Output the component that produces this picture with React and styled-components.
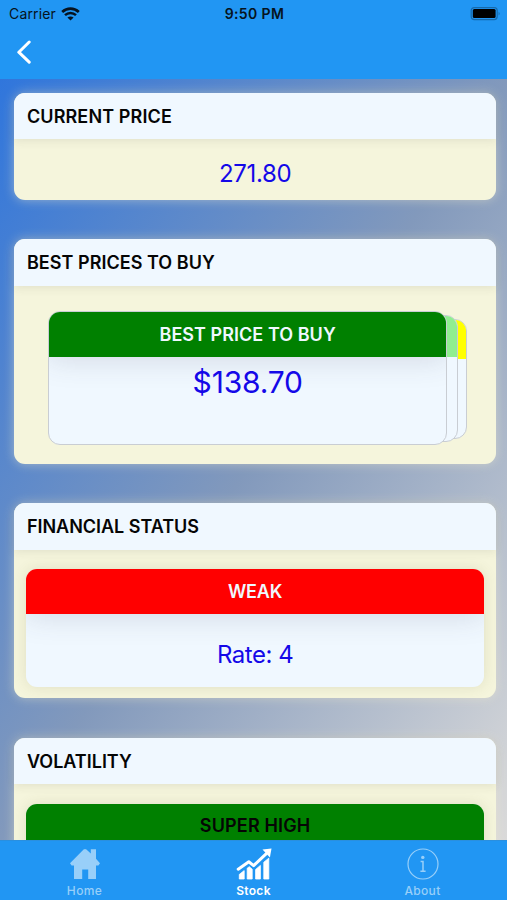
import styled, { createGlobalStyle } from 'styled-components'

const GlobalStyle = createGlobalStyle`
  * {
    box-sizing: border-box;
  }
  body {
    margin: 0;
    overflow: hidden;
    font-family: Inter, "Liberation Sans", sans-serif;
    color: #050505;
  }
`

const Screen = styled.div`
  height: 900px;
  display: flex;
  flex-direction: column;
  background-color: #2196f3;
`

const StatusBar = styled.div`
  height: 27px;
  flex-shrink: 0;
  display: grid;
  grid-template-columns: 1fr auto 1fr;
  align-items: center;
  padding: 0 6px 0 9px;
  font-size: 14px;
  color: #061320;
`

const Carrier = styled.div`
  display: flex;
  align-items: center;
  gap: 5px;
  letter-spacing: 0.15px;
`

const Time = styled.div`
  font-weight: 600;
  letter-spacing: 0.4px;
  margin-right: 1px;
`

const Battery = styled.svg`
  justify-self: end;
`

const NavBar = styled.header`
  height: 52px;
  flex-shrink: 0;
  padding: 13px 0 0 16px;
`

const BackBtn = styled.button`
  display: block;
  padding: 0;
  border: none;
  background: none;
`

const Content = styled.main`
  flex: 1;
  min-height: 0;
  overflow: hidden;
  display: flex;
  flex-direction: column;
  gap: 39.5px;
  padding: 13.5px 11.2px 0 14.4px;
  background: linear-gradient(to bottom right, #3076dc, #8299bc 50%, #dadada);
`

const Card = styled.section`
  height: ${props => props.$height}px;
  flex-shrink: 0;
  display: flex;
  flex-direction: column;
  border-radius: 11px;
  background-color: beige;
  box-shadow: 0 0 11px rgba(245, 238, 205, 0.48);
`

const CardTitle = styled.h2`
  height: 46.5px;
  flex-shrink: 0;
  margin: 0;
  padding: 0 12.5px;
  font-size: 18px;
  line-height: 47px;
  font-weight: 600;
  letter-spacing: ${props => props.$spacing || 0}px;
  border-radius: 11px 11px 0 0;
  background-color: aliceblue;
  box-shadow: 0 2px 10px rgba(60, 60, 60, 0.1);
`

const CardBody = styled.div`
  flex: 1;
  padding: ${props => props.$padding || '0'};
`

const Value = styled.div`
  text-align: center;
  color: #1408e8;
  font-size: ${props => props.$size || 24}px;
  line-height: ${props => props.$line}px;
  letter-spacing: ${props => props.$spacing || 0}px;
`

const Panel = styled.div`
  height: 117.5px;
  border-radius: 11px;
  overflow: hidden;
  background-color: aliceblue;
  box-shadow: 0 0 14px rgba(100, 100, 60, 0.14);
`

const Banner = styled.div`
  height: 45px;
  text-align: center;
  font-size: 18px;
  line-height: ${props => props.$line || 45}px;
  font-weight: 600;
  letter-spacing: ${props => props.$spacing || 0}px;
  color: ${props => props.$text || 'aliceblue'};
  background-color: ${props => props.$color};
  box-shadow: 0 2px 30px rgba(60, 60, 90, 0.17);
`

const Deck = styled.div`
  position: relative;
  height: 134px;
  width: 398px;
`

// cards further back are shorter and stick out to the right
const DeckCard = styled.div`
  position: absolute;
  top: ${props => props.$depth * 3.75}px;
  bottom: ${props => props.$depth * 3.2}px;
  left: ${props => props.$offset || 0}px;
  width: 398.5px;
  z-index: ${props => 3 - props.$depth};
  overflow: hidden;
  border: 1px solid #c9cdd3;
  border-radius: 12px;
  background-color: aliceblue;
`

const DeckBanner = styled(Banner)`
  height: ${props => props.$height}px;
  margin: -1px -1px 0;
  box-shadow: ${props => props.$flat ? 'none' : '0 2px 30px rgba(60, 60, 90, 0.17)'};
`

const TabBar = styled.nav`
  height: 60px;
  flex-shrink: 0;
  display: grid;
  grid-template-columns: repeat(3, 1fr);
  border-top: 1px solid #2a8fdf;
`

const Tab = styled.div`
  display: flex;
  flex-direction: column;
  align-items: center;
  padding-top: 7px;
  gap: 2px;
  font-size: 12px;
  line-height: 18px;
  font-weight: ${props => props.$active ? 600 : 500};
  letter-spacing: ${props => props.$active ? 0.3 : 0.35}px;
  color: ${props => props.$active ? 'white' : '#98cff9'};
`

function WifiIcon(){
  return(
    <svg width="19" height="14" viewBox="0 0 19 14" fill="none" stroke="#061320">
      <path d="M1.2 4.9C6 .4 13 .4 17.8 4.9" strokeWidth="2.7"/>
      <path d="M4 8.2C7.2 5.2 11.8 5.2 15 8.2" strokeWidth="2.5"/>
      <path d="M9.5 13.6 6.4 10.6C8.2 9 10.8 9 12.6 10.6Z" fill="#061320" stroke="none"/>
    </svg>
  )
}

function HomeIcon(){
  return(
    <svg width="32" height="32" viewBox="0 0 32 32" fill="currentColor">
      <path d="M16 1.4Q16.6 .8 17.4 1.4L21.8 5.6V1.2H27V10.8L31 15.2 29.4 17.4H27V31H19.2V21.6H13.2V31H5V17.4H2.6L1 15.2 14.6 1.4Q15.3 .8 16 1.4Z"/>
    </svg>
  )
}

function StockIcon(){
  return(
    <svg width="36" height="32" viewBox="0 0 36 32" fill="currentColor">
      <path d="M2.2 21.2 12.8 13.8 17.6 17.6 30.6 5.4" fill="none" stroke="currentColor" strokeWidth="3" strokeLinecap="round" strokeLinejoin="round"/>
      <path d="M26.5 1.6 35.5 0.5 33.9 9.4Z"/>
      <path d="M3.3 26.4 8.2 22.6V31H3.3ZM11.2 20.2 13.3 18.7 16.2 21.2V31H11.2ZM19.6 21.5 24.4 17.4V31H19.6ZM27.8 14.2 32.8 10.2V31H27.8Z" stroke="currentColor" strokeWidth="0.8" strokeLinejoin="round"/>
    </svg>
  )
}

function AboutIcon(){
  return(
    <svg width="32" height="32" viewBox="0 0 32 32" fill="none" stroke="currentColor">
      <circle cx="16" cy="16" r="15" strokeWidth="1.2"/>
      <circle cx="15.8" cy="9.4" r="1.7" fill="currentColor" stroke="none"/>
      <path d="M13.6 13.6H16V23M13.4 23.2H18.6" strokeWidth="1.5"/>
    </svg>
  )
}

function App(){
  return(
    <>
      <GlobalStyle/>
      <Screen>
        <StatusBar>
          <Carrier>Carrier <WifiIcon/></Carrier>
          <Time>9:50 PM</Time>
          <Battery width="31" height="14" viewBox="0 0 31 14">
            <rect x="1.2" y="0.6" width="26" height="12" rx="3" fill="none" stroke="#176aab" strokeWidth="1.2"/>
            <rect x="2.8" y="2.1" width="22.8" height="9" rx="1.5" fill="#000"/>
            <path d="M28.6 4.7Q30.8 6.6 28.6 8.5Z" fill="#176aab"/>
          </Battery>
        </StatusBar>
        <NavBar>
          <BackBtn type="button" aria-label="Back">
            <svg width="16" height="24" viewBox="0 0 16 24" fill="none" stroke="white" strokeWidth="3" strokeLinecap="round" strokeLinejoin="round">
              <path d="M13.2 2 2.8 12.2 13.2 22.2"/>
            </svg>
          </BackBtn>
        </NavBar>
        <Content>
          <Card $height={107}>
            <CardTitle $spacing={0.12}>CURRENT PRICE</CardTitle>
            <CardBody $padding="14px 0 0">
              <Value $line={42} $spacing={-0.35}>271.80</Value>
            </CardBody>
          </Card>
          <Card $height={224.5}>
            <CardTitle $spacing={0.04}>BEST PRICES TO BUY</CardTitle>
            <CardBody $padding="25.5px 0 0 34px">
              <Deck>
                <DeckCard $depth={2} $offset={20}>
                  <DeckBanner $flat $height={40} $color="yellow"/>
                </DeckCard>
                <DeckCard $depth={1} $offset={11.4}>
                  <DeckBanner $flat $height={42} $color="lightgreen"/>
                </DeckCard>
                <DeckCard $depth={0}>
                  <DeckBanner $height={46} $line={48} $spacing={0.04} $color="green">BEST PRICE TO BUY</DeckBanner>
                  <Value $size={30} $line={51} $spacing={-0.2}>$138.70</Value>
                </DeckCard>
              </Deck>
            </CardBody>
          </Card>
          <Card $height={195}>
            <CardTitle $spacing={-0.02}>FINANCIAL STATUS</CardTitle>
            <CardBody $padding="19.5px 12px 0">
              <Panel>
                <Banner $color="red" $spacing={-0.15}>WEAK</Banner>
                <Value $line={82} $spacing={-0.45}>Rate: 4</Value>
              </Panel>
            </CardBody>
          </Card>
          <Card $height={195}>
            <CardTitle>VOLATILITY</CardTitle>
            <CardBody $padding="19.5px 12px 0">
              <Panel>
                <Banner $color="green" $line={44} $spacing={0.15} $text="#050505">SUPER HIGH</Banner>
              </Panel>
            </CardBody>
          </Card>
        </Content>
        <TabBar>
          <Tab><HomeIcon/>Home</Tab>
          <Tab $active><StockIcon/>Stock</Tab>
          <Tab><AboutIcon/>About</Tab>
        </TabBar>
      </Screen>
    </>
  )
}

export default App
